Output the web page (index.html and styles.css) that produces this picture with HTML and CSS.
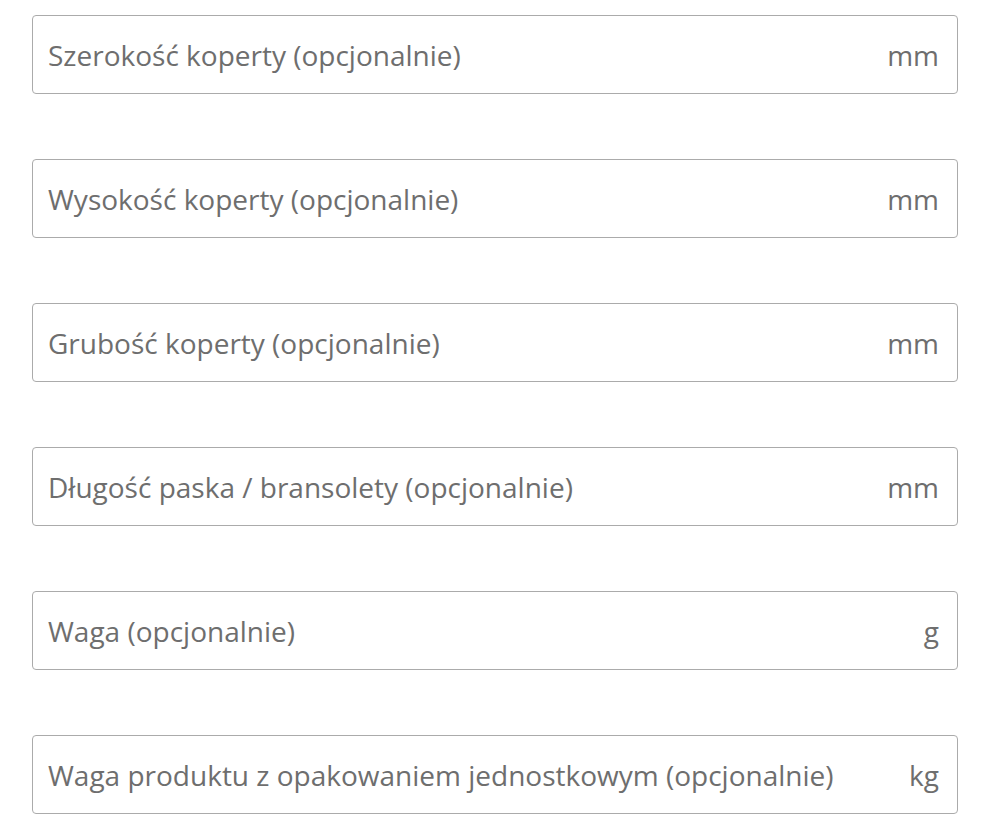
FILE: index.html
```html
<!DOCTYPE html>
<html lang="pl">
<head>
<meta charset="utf-8">
<link rel="stylesheet" href="styles.css">
</head>
<body>
<div class="form">
  <label class="field"><span class="label">Szerokość koperty (opcjonalnie)</span><span class="unit">mm</span></label>
  <label class="field"><span class="label">Wysokość koperty (opcjonalnie)</span><span class="unit">mm</span></label>
  <label class="field"><span class="label">Grubość koperty (opcjonalnie)</span><span class="unit">mm</span></label>
  <label class="field"><span class="label">Długość paska / bransolety (opcjonalnie)</span><span class="unit">mm</span></label>
  <label class="field"><span class="label">Waga (opcjonalnie)</span><span class="unit">g</span></label>
  <label class="field"><span class="label">Waga produktu z opakowaniem jednostkowym (opcjonalnie)</span><span class="unit">kg</span></label>
</div>
</body>
</html>
```
FILE: styles.css
```css
html, body {
  margin: 0;
  padding: 0;
  background: #fff;
}
.form {
  display: flex;
  flex-direction: column;
  gap: 65px;
  padding: 15px 0 0 32px;
  width: 926px;
  font-family: "Open Sans", "Liberation Sans", sans-serif;
}
.field {
  box-sizing: border-box;
  height: 79px;
  border: 1.5px solid #ababab;
  border-radius: 4px;
  display: flex;
  align-items: center;
  justify-content: space-between;
  padding: 0 18px 0 15px;
  color: #6e6e6e;
  font-size: 28px;
}
```
